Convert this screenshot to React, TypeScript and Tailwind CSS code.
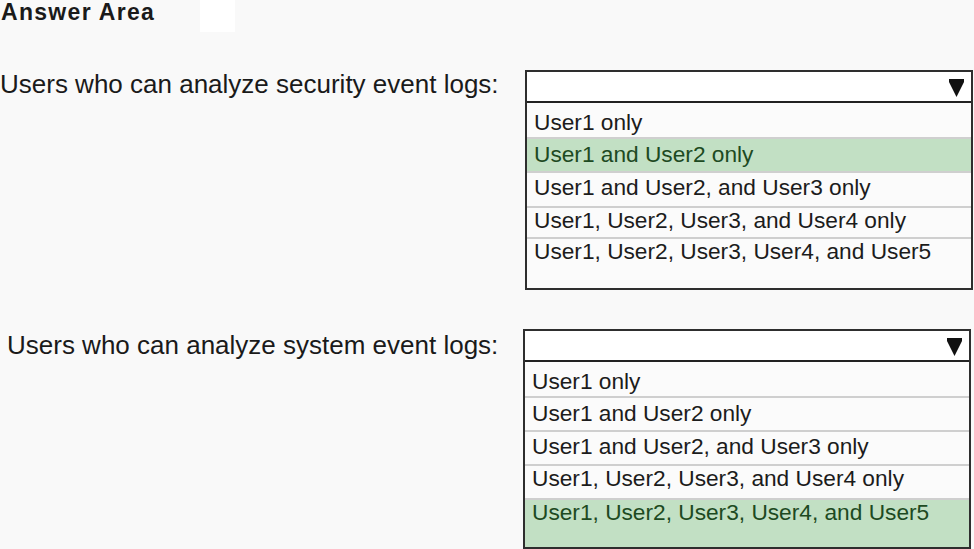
import React from "react";

type Option = { label: string; selected?: boolean };

const securityOptions: Option[] = [
  { label: "User1 only" },
  { label: "User1 and User2 only", selected: true },
  { label: "User1 and User2, and User3 only" },
  { label: "User1, User2, User3, and User4 only" },
  { label: "User1, User2, User3, User4, and User5" },
];

const systemOptions: Option[] = [
  { label: "User1 only" },
  { label: "User1 and User2 only" },
  { label: "User1 and User2, and User3 only" },
  { label: "User1, User2, User3, and User4 only" },
  { label: "User1, User2, User3, User4, and User5", selected: true },
];

// row box classes (height incl. separator + text offset), the source image is a bit uneven
const securityRows = [
  "h-[34px] pt-[7px]",
  "h-[34px] pt-[3px]",
  "h-[35px] pt-[2px]",
  "h-[31px] pt-0",
  "h-[51px] pt-0",
];

const systemRows = [
  "h-[34px] pt-[7px]",
  "h-[34px] pt-[3px]",
  "h-[34px] pt-[2px]",
  "h-[34px] pt-0",
  "h-[49px] pt-0",
];

function Caret() {
  return (
    <svg width="15" height="18" viewBox="0 0 15 18" className="mt-[2px]">
      <polygon points="0,0 15,0 15,3 7.5,18 0,3" fill="#111" />
    </svg>
  );
}

function DropList({ options, rows }: { options: Option[]; rows: string[] }) {
  return (
    <div className="w-[448px] border-2 border-[#2e2e2e] bg-[#fbfbfb]">
      {/* closed select header */}
      <div className="h-[31px] flex items-center justify-end pr-[7px] bg-white border-b-2 border-[#222]">
        <Caret />
      </div>
      {options.map((o, i) => (
        <div
          key={o.label}
          className={`${i > 0 ? "border-t-2 border-[#cfcfcf]" : ""} ${rows[i]} ${
            o.selected ? "bg-[#c2e0c4] text-[#1d4a22]" : "text-[#1c1c1c]"
          }`}
        >
          <div className="h-[24px] flex items-center pl-[7px] text-[22.7px] leading-none">
            {o.label}
          </div>
        </div>
      ))}
    </div>
  );
}

export default function App() {
  return (
    <div
      className="w-[974px] h-[549px] overflow-hidden bg-[#f9f9f9] text-[#1a1a1a]"
      style={{ fontFamily: '"Liberation Sans", Arial, sans-serif' }}
    >
      {/* title */}
      <div className="flex items-start">
        <div className="w-[200px] pl-[1px] text-[23px] font-bold leading-[24px] tracking-[1.3px]">
          Answer Area
        </div>
        <div className="w-[35px] h-[32px] bg-white" />
      </div>

      {/* security event logs */}
      <div className="flex items-start mt-[38px]">
        <div className="w-[525px] h-[31px] flex items-center pb-[3px] text-[26px] leading-none">
          Users who can analyze security event logs:
        </div>
        <DropList options={securityOptions} rows={securityRows} />
      </div>

      {/* system event logs */}
      <div className="flex items-start mt-[39px]">
        <div className="w-[523px] h-[31px] flex items-center pl-[7px] text-[26px] leading-none">
          Users who can analyze system event logs:
        </div>
        <DropList options={systemOptions} rows={systemRows} />
      </div>
    </div>
  );
}
